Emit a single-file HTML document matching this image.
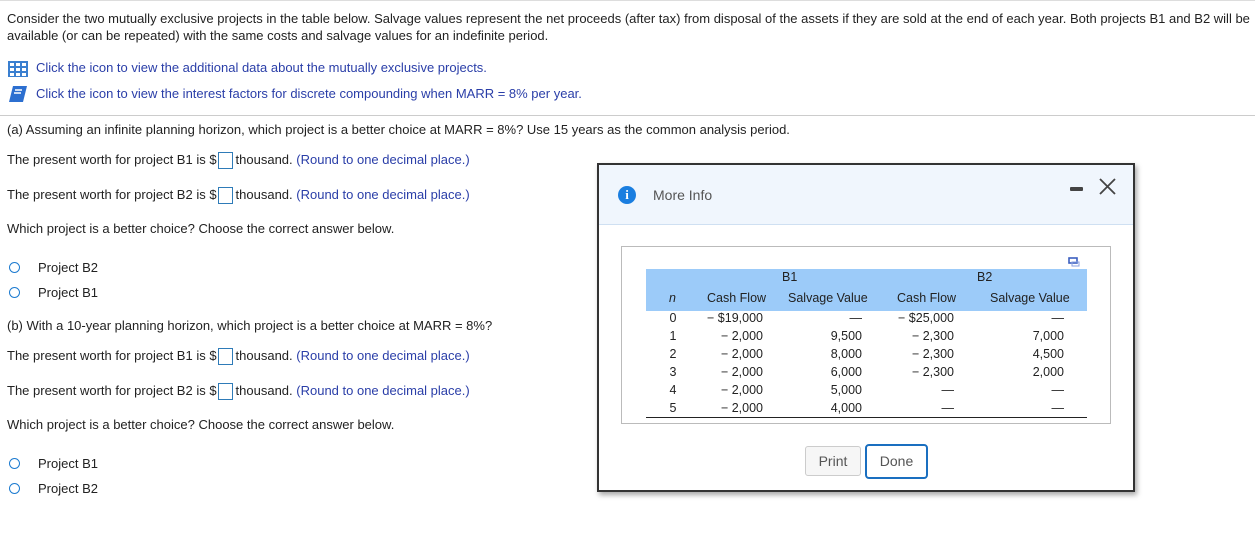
<!DOCTYPE html>
<html><head><style>
body{margin:0;width:1255px;height:550px;background:#fff;font-family:"Liberation Sans",sans-serif;font-size:13px;color:#222;position:relative;overflow:hidden}
.a{position:absolute;white-space:nowrap}
.blue{color:#2a3ea8}
.box{display:inline-block;width:15px;height:17px;border:1px solid #2e7bb8;vertical-align:middle;margin:0 3px 0 1px;box-sizing:border-box}
.rad{position:absolute;width:11px;height:11px;border:1.5px solid #1d7bd0;border-radius:50%;box-sizing:border-box}
.t{position:absolute;text-align:right;font-size:12.5px;color:#222}
</style></head><body>
<div class="a" style="left:0;top:0;width:1255px;border-top:1px solid #ddd"></div>
<div class="a" style="left:7px;top:10px;line-height:17px">Consider the two mutually exclusive projects in the table below. Salvage values represent the net proceeds (after tax) from disposal of the assets if they are sold at the end of each year. Both projects B1 and B2 will be<br>available (or can be repeated) with the same costs and salvage values for an indefinite period.</div>
<svg class="a" style="left:8px;top:61px" width="20" height="16"><rect x="0" y="0" width="20" height="16" fill="#3a7fd0"/><g fill="#fff"><rect x="2" y="2" width="4" height="3"/><rect x="8" y="2" width="4" height="3"/><rect x="14" y="2" width="4" height="3"/><rect x="2" y="7" width="4" height="3"/><rect x="8" y="7" width="4" height="3"/><rect x="14" y="7" width="4" height="3"/><rect x="2" y="12" width="4" height="3"/><rect x="8" y="12" width="4" height="3"/><rect x="14" y="12" width="4" height="3"/></g></svg>
<div class="a blue" style="left:36px;top:60px">Click the icon to view the additional data about the mutually exclusive projects.</div>
<svg class="a" style="left:8px;top:84px" width="20" height="20"><path d="M5 2h14l-4 16H1z" fill="#2c6fd0"/><path d="M7 6h7M6 9h7" stroke="#fff" stroke-width="1.5"/></svg>
<div class="a blue" style="left:36px;top:86px">Click the icon to view the interest factors for discrete compounding when MARR = 8% per year.</div>
<div class="a" style="left:0;top:115px;width:1255px;border-top:1px solid #ccc"></div>
<div class="a" style="left:7px;top:122px">(a) Assuming an infinite planning horizon, which project is a better choice at MARR = 8%? Use 15 years as the common analysis period.</div>
<div class="a" style="left:7px;top:152px">The present worth for project B1 is $<span class="box"></span>thousand. <span class="blue">(Round to one decimal place.)</span></div>
<div class="a" style="left:7px;top:187px">The present worth for project B2 is $<span class="box"></span>thousand. <span class="blue">(Round to one decimal place.)</span></div>
<div class="a" style="left:7px;top:221px">Which project is a better choice? Choose the correct answer below.</div>
<div class="rad" style="left:9px;top:262px"></div><div class="a" style="left:38px;top:260px">Project B2</div>
<div class="rad" style="left:9px;top:287px"></div><div class="a" style="left:38px;top:285px">Project B1</div>
<div class="a" style="left:7px;top:318px">(b) With a 10-year planning horizon, which project is a better choice at MARR = 8%?</div>
<div class="a" style="left:7px;top:348px">The present worth for project B1 is $<span class="box"></span>thousand. <span class="blue">(Round to one decimal place.)</span></div>
<div class="a" style="left:7px;top:383px">The present worth for project B2 is $<span class="box"></span>thousand. <span class="blue">(Round to one decimal place.)</span></div>
<div class="a" style="left:7px;top:417px">Which project is a better choice? Choose the correct answer below.</div>
<div class="rad" style="left:9px;top:458px"></div><div class="a" style="left:38px;top:456px">Project B1</div>
<div class="rad" style="left:9px;top:483px"></div><div class="a" style="left:38px;top:481px">Project B2</div>

<div class="a" style="left:597px;top:163px;width:538px;height:329px;border:2px solid #333;box-sizing:border-box;background:#fff;box-shadow:2px 3px 5px rgba(0,0,0,.35)">
 <div style="position:absolute;left:0;top:0;right:0;height:59px;background:#f0f6fd;border-bottom:1px solid #cfe0f2"></div>
 <div style="position:absolute;left:19px;top:21px;width:18px;height:18px;border-radius:50%;background:#1a7ee0;color:#fff;font:bold 13px 'Liberation Serif',serif;text-align:center;line-height:18px">i</div>
 <div class="a" style="left:54px;top:22px;color:#555;font-size:14px">More Info</div>
 <div class="a" style="left:471px;top:22px;width:13px;height:4px;background:#444;border-radius:1px"></div>
 <svg class="a" style="left:500px;top:13px" width="17" height="17"><path d="M1 1L16 16M16 1L1 16" stroke="#444" stroke-width="1.8"/></svg>
 <div class="a" style="left:22px;top:81px;width:490px;height:178px;border:1px solid #bbb;box-sizing:border-box"></div>
 <svg class="a" style="left:469px;top:92px" width="12" height="10"><rect x="1" y="1" width="8" height="5" fill="none" stroke="#3b5fc0" stroke-width="1.6"/><rect x="4" y="5" width="7" height="4" fill="none" stroke="#8aa0e0"/></svg>
 <div class="a" style="left:47px;top:104px;width:441px;height:42px;background:#9ccbf9"></div>
 <div class="a" style="left:47px;top:252px;width:441px;border-top:1px solid #222"></div>
</div>
<div class="t" style="left:782px;top:270px">B1</div>
<div class="t" style="left:977px;top:270px">B2</div>
<div class="t" style="left:669px;top:291px;font-style:italic">n</div>
<div class="t" style="left:707px;top:291px">Cash Flow</div>
<div class="t" style="left:788px;top:291px">Salvage Value</div>
<div class="t" style="left:897px;top:291px">Cash Flow</div>
<div class="t" style="left:990px;top:291px">Salvage Value</div>
<div style="position:absolute;left:663px;top:309px;font-size:12.5px;line-height:18px;text-align:center;width:20px">0<br>1<br>2<br>3<br>4<br>5</div>
<div style="position:absolute;left:680px;width:83px;top:309px;font-size:12.5px;line-height:18px;text-align:right">− $19,000<br>− 2,000<br>− 2,000<br>− 2,000<br>− 2,000<br>− 2,000</div>
<div style="position:absolute;left:780px;width:82px;top:309px;font-size:12.5px;line-height:18px;text-align:right">—<br>9,500<br>8,000<br>6,000<br>5,000<br>4,000</div>
<div style="position:absolute;left:860px;width:94px;top:309px;font-size:12.5px;line-height:18px;text-align:right">− $25,000<br>− 2,300<br>− 2,300<br>− 2,300<br>—<br>—</div>
<div style="position:absolute;left:980px;width:84px;top:309px;font-size:12.5px;line-height:18px;text-align:right">—<br>7,000<br>4,500<br>2,000<br>—<br>—</div>
<div class="a" style="left:805px;top:446px;width:56px;height:30px;border:1px solid #ccc;border-radius:3px;background:#f6f6f6;box-sizing:border-box;text-align:center;line-height:28px;color:#555;font-size:14px">Print</div>
<div class="a" style="left:865px;top:444px;width:63px;height:35px;border:2px solid #1a6fc0;border-radius:4px;background:#fff;box-sizing:border-box;text-align:center;line-height:31px;color:#555;font-size:14px">Done</div>
</body></html>
